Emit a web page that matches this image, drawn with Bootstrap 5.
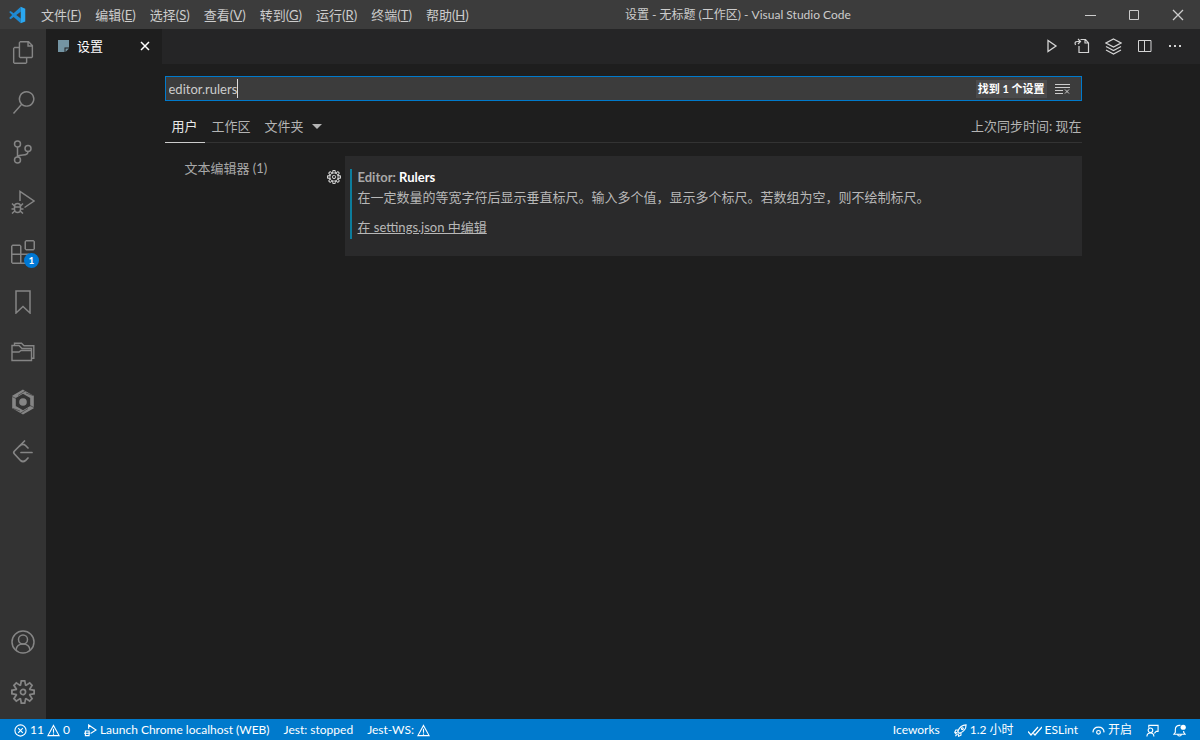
<!DOCTYPE html>
<html lang="zh-CN" data-bs-theme="dark">
<head>
<meta charset="utf-8">
<meta name="viewport" content="width=device-width, initial-scale=1">
<title>设置 - 无标题 (工作区) - Visual Studio Code</title>
<link href="https://cdn.jsdelivr.net/npm/bootstrap@5.3.0/dist/css/bootstrap.min.css" rel="stylesheet">
<style>
  body { font-family: Lato, "Noto Sans CJK SC", sans-serif; font-size: 13px; line-height: 16px; background: #1e1e1e; color: #ccc; }
  button, input { font: inherit; color: inherit; background: none; border: 0; padding: 0; }
  svg { display: block; flex: none; fill: none; stroke: currentColor; }
  svg .solid { fill: currentColor; stroke: none; }
  svg.flat { stroke: none; }
  a { color: inherit; }
  .title-bar { height: 29px; background: #3c3c3c; }
  .menu-list { gap: 8px; padding-left: 8px; }
  .menu-list button { padding: 0 7px; white-space: nowrap; }
  .menu-list u { text-underline-offset: 1px; }
  .window-title { font-size: 12px; }
  .window-btns { min-width: 200px; }
  .window-btns button { width: 44px; height: 29px; display: grid; place-items: center; }
  .activity-bar { width: 46px; background: #333; color: #858585; padding-bottom: 4px; }
  .activity-bar .group { display: flex; flex-direction: column; gap: 4px; }
  .activity-bar button { position: relative; width: 46px; height: 46px; display: grid; place-items: center; }
  .count { position: absolute; right: 7px; bottom: 7px; width: 15px; height: 15px; border-radius: 50%; background: #0078d4; color: #fff; font-size: 10px; line-height: 15px; font-weight: 700; }
  .tab-strip { height: 35px; background: #252526; }
  .file-tab { width: 116px; background: #1e1e1e; color: #fff; padding: 0 12px 1px 12px; }
  .editor-actions { gap: 15px; padding: 0 18px 1px 0; color: #d4d4d4; }
  .settings-page { max-width: 917px; padding-top: 12px; }
  .search-box { position: relative; height: 25px; background: #3c3c3c; border: 1px solid #007acc; padding: 0 11px 0 3px; }
  .search-box input { outline: 0; min-width: 0; }
  .caret { position: absolute; left: 71px; top: 2px; width: 1px; height: 19px; background: #ddd; }
  .found { background: #4a4a4b; color: #fff; font-size: 11px; padding: 1px 2px; font-weight: 700; }
  .scope-row { height: 33px; margin-top: 9px; border-bottom: 1px solid #333; color: #b4b4b4; }
  .scope-row button { padding: 0 7px; }
  .scope-row .active-scope { color: #e7e7e7; border-bottom: 1px solid #ccc; margin-bottom: -1px; }
  .result-row { padding-top: 13px; }
  .toc { width: 180px; padding: 4px 4px 0 20px; color: #a8a8a8; }
  .toc-gear { margin-top: 10px; color: #d0d0d0; }
  .setting-card { background: #2a2a2b; padding: 13px 5px 17px; }
  .setting-body { border-left: 2px solid #0c7d9d; padding: 0 0 4px 6px; color: #b8b8b8; }
  .setting-body h1 { font-size: 13px; line-height: 16px; font-weight: 700; margin: 0 0 4px; color: #a8a8a8; }
  .setting-body p { margin: 0 0 14px; }
  .status-bar { height: 21px; background: #007acc; color: #fff; padding: 1px 14px 0; font-size: 12px; }
  .status-group { display: flex; gap: 14px; }
  .status-bar button { display: flex; align-items: center; gap: 3px; white-space: nowrap; }
</style>
<script src="https://cdn.jsdelivr.net/npm/bootstrap@5.3.0/dist/js/bootstrap.bundle.min.js"></script>
</head>
<body class="vh-100 d-flex flex-column overflow-hidden">
<header class="title-bar d-flex align-items-center flex-shrink-0">
  <div class="menu-list d-flex align-items-center">
    <svg class="flat" width="18" height="18" viewBox="0 0 24 24"><path fill="#1f8ad2" d="M17 1 7.500 9.500 3.500 6.500 1.500 8 5.500 12l-4 4 2 1.500 4-3L17 23v-6.500L11 12l6-4.500z"/><path fill="#2aa7f0" d="M17 1 23 3.500v17L17 23z"/></svg>
    <nav class="d-flex" aria-label="菜单">
      <button>文件(<u>F</u>)</button><button>编辑(<u>E</u>)</button><button>选择(<u>S</u>)</button><button>查看(<u>V</u>)</button><button>转到(<u>G</u>)</button><button>运行(<u>R</u>)</button><button>终端(<u>T</u>)</button><button>帮助(<u>H</u>)</button>
    </nav>
  </div>
  <div class="window-title mx-auto">设置 - 无标题 (工作区) - Visual Studio Code</div>
  <div class="window-btns d-flex justify-content-end">
    <button aria-label="最小化"><svg width="12" height="12"><path d="M1 6.500h11"/></svg></button>
    <button aria-label="最大化"><svg width="12" height="12"><path d="M1.500 1.500h9v9h-9z"/></svg></button>
    <button aria-label="关闭"><svg width="12" height="12" stroke-width="1.300"><path d="m1 1 10 10M11 1 1 11"/></svg></button>
  </div>
</header>

<div class="d-flex flex-grow-1">
  <nav class="activity-bar d-flex flex-column justify-content-between flex-shrink-0" aria-label="活动栏">
    <div class="group">
      <button aria-label="资源管理器"><svg width="23" height="23" viewBox="0 0 24 24"><path class="solid" d="M17.500 0h-9L7 1.500V6H2.500L1 7.500v15.070L2.500 24h12.070L16 22.570V18h4.700l1.300-1.430V4.500L17.500 0zm0 2.120l2.380 2.380H17.500V2.120zm-3 20.380h-12v-15H7v9.070L8.500 18h6v4.500zm6-6h-12v-15H16V6h4.500v10.500z"/></svg></button>
      <button aria-label="搜索"><svg width="23" height="23" viewBox="0 0 24 24"><path class="solid" d="M15.250 0a8.250 8.250 0 0 0-6.180 13.720L1 22.880l1.120 1 8.050-9.120A8.251 8.251 0 1 0 15.250.01V0zm0 15a6.750 6.750 0 1 1 0-13.500 6.750 6.750 0 0 1 0 13.500z"/></svg></button>
      <button aria-label="源代码管理"><svg width="24" height="24" viewBox="0 0 24 24" stroke-width="1.500"><circle cx="6.500" cy="4" r="3"/><circle cx="6.500" cy="20" r="3"/><circle cx="17" cy="8.500" r="3"/><path d="M6.500 7v10M17 11.500c0 3-2 3.500-5 3.500-3 0-4.500.5-5.500 2"/></svg></button>
      <button aria-label="运行和调试"><svg width="24" height="24" viewBox="0 0 24 24" stroke-width="1.500"><path d="M9 11V1.500L23 11l-9.500 6.500"/><path d="M3.500 16.500a3 3 0 0 1 6 0v3a3 3 0 0 1-6 0zM3.500 17h6M3.500 16 1 13.500M9.500 16l2.500-2.500M3.500 19H.5M9.500 19h3M3.700 21 1 23.500M9.300 21l2.700 2.500"/></svg></button>
      <button aria-label="扩展"><svg width="24" height="24" viewBox="0 0 24 24"><path class="solid" d="M13.500 1.500L15 0h7.500L24 1.500V9l-1.500 1.500H15L13.500 9V1.500zm1.500 0V9h7.500V1.500H15zM0 15V6l1.500-1.500H9L10.500 6v7.500H18l1.500 1.500v7.500L18 24H1.500L0 22.500V15zm9-1.500V6H1.500v7.500H9zM9 15H1.500v7.500H9V15zm1.500 7.500H18V15h-7.500v7.500z"/></svg><span class="count">1</span></button>
      <button aria-label="书签"><svg width="24" height="24" viewBox="0 0 24 24" stroke-width="1.500"><path d="M5 1h14v22l-7-6.500L5 23z"/></svg></button>
      <button aria-label="项目管理器"><svg width="24" height="24" viewBox="0 0 24 24" stroke-width="1.400"><path d="M1 20.500v-15h7l3 3h9.500v12zM1 12h7l2-1.500h10.500M3.500 5.500V3.300h7l2.500 2.500h9.800v12.500h-2"/></svg></button>
      <button aria-label="Iceworks"><svg width="24" height="26" viewBox="0 0 24 26"><path d="M12 2.700 21 7.900v10.200l-9 5.200-9-5.200V7.900z" stroke-width="3.600"/><circle class="solid" cx="12" cy="13" r="3.800"/><path d="m15 1.500-8 5M1 7.500l5 2.500v6M2 19.500l7 2.500M9 24.500l8-5M23 18.500l-5-2.500v-6M22 6.500 15 4" stroke="#333" stroke-width=".6"/></svg></button>
      <button aria-label="LeetCode"><svg width="24" height="24" viewBox="0 0 24 24" stroke-width="1.700" stroke-linecap="round"><path d="m13.500 1-10 10q-1.500 1.500 0 3l6 6.500q2.500 2 5 0l2.500-2.500M8.500 6q3.500-3 6-.5l2.500 2.500M10 12.500h11"/></svg></button>
    </div>
    <div class="group">
      <button aria-label="帐户"><svg width="24" height="24" viewBox="0 0 24 24" stroke-width="1.500"><circle cx="12" cy="12" r="11"/><circle cx="12" cy="9.500" r="4.500"/><path d="M5 20c.5-4 3-6 7-6s6.500 2 7 6"/></svg></button>
      <button aria-label="管理"><svg width="24" height="24" viewBox="0 0 24 24"><path id="gear" class="solid" d="M19.850 8.750l4.150.83v4.840l-4.150.83 2.350 3.520-3.430 3.430-3.520-2.350-.83 4.150H9.580l-.83-4.150-3.520 2.350-3.430-3.430 2.350-3.520L0 14.420V9.580l4.150-.83L1.800 5.230 5.230 1.800l3.520 2.350L9.580 0h4.840l.83 4.150 3.520-2.350 3.430 3.430-2.350 3.520zm-1.570 5.070l4-.81v-2l-4-.81-.54-1.300 2.290-3.430-1.430-1.430-3.430 2.290-1.300-.54-.81-4h-2l-.81 4-1.300.54-3.430-2.290-1.430 1.430L6.380 8.900l-.54 1.300-4 .81v2l4 .81.54 1.300-2.290 3.430 1.430 1.430 3.430-2.290 1.300.54.81 4h2l.81-4 1.300-.54 3.430 2.290 1.430-1.430-2.290-3.430.54-1.300zm-8.186-4.672A3.430 3.430 0 0 1 12 8.570 3.440 3.440 0 0 1 15.430 12a3.430 3.430 0 1 1-5.336-2.852zm.956 4.274c.281.188.612.288.95.288A1.700 1.700 0 0 0 13.710 12a1.710 1.710 0 1 0-2.660 1.422z"/></svg></button>
    </div>
  </nav>

  <main class="flex-grow-1">
    <div class="tab-strip d-flex justify-content-between">
      <div class="file-tab d-flex align-items-center">
        <svg class="flat" width="11" height="12" viewBox="0 0 11 12"><path fill="#7494a3" d="M0 0h11v7.500H6.500V12H0z"/><path fill="#7494a3" d="M7.500 8.500H11L7.500 12z"/></svg>
        <span class="ms-2">设置</span>
        <button class="ms-auto" aria-label="关闭标签"><svg width="10" height="10" stroke-width="1.500"><path d="m1 1 8 8M9 1 1 9"/></svg></button>
      </div>
      <div class="editor-actions d-flex align-items-center">
        <button aria-label="运行"><svg width="16" height="16" stroke-width="1.300"><path d="M5 2.500v11L13 8z"/></svg></button>
        <button aria-label="打开设置文件"><svg width="16" height="16" stroke-width="1.200"><path d="M5 8v6.500h9.500V5l-3-3.500H6.500M11 1.500V5h3.500M1.500 7Q0 3.500 3.500 3.500H6M4 1l2.500 2.500L4 6"/></svg></button>
        <button aria-label="图层"><svg width="17" height="17" viewBox="0 0 17 17" stroke-width="1.200"><path d="m8.500 1 7.500 4-7.500 4L1 5zM1 8.500l7.500 4 7.500-4M1 12l7.500 4 7.500-4"/></svg></button>
        <button aria-label="拆分编辑器"><svg width="16" height="16"><path d="M1.500 2.500h12.500v11H1.500zM7.500 2.500v11"/></svg></button>
        <button aria-label="更多"><svg width="14" height="16"><path class="solid" d="M1 7h2v2H1zM6 7h2v2H6zM11 7h2v2h-2z"/></svg></button>
      </div>
    </div>

    <div class="settings-page mx-auto">
      <div class="search-box d-flex align-items-center">
        <input class="flex-grow-1" type="text" value="editor.rulers" aria-label="搜索设置">
        <span class="caret"></span>
        <span class="found">找到 1 个设置</span>
        <button class="ms-2" aria-label="清除搜索"><svg width="15" height="12"><path d="M0 1.500h15M0 4.500h15M0 7.500h8M0 10.500h8M10 6.500l4 4M14 6.500l-4 4"/></svg></button>
      </div>
      <div class="scope-row d-flex">
        <button class="active-scope">用户</button>
        <button>工作区</button>
        <button class="d-flex align-items-center gap-2">文件夹<svg width="10" height="6"><path class="solid" d="M0 1h10L5 6z"/></svg></button>
        <span class="ms-auto align-self-center">上次同步时间: 现在</span>
      </div>
      <div class="result-row d-flex">
        <div class="toc d-flex justify-content-between align-items-start flex-shrink-0">
          <span>文本编辑器 (1)</span>
          <button class="toc-gear" aria-label="更多操作"><svg width="14" height="14" viewBox="0 0 24 24"><use href="#gear"/><circle cx="12" cy="12" r="7" stroke-width="1.500"/></svg></button>
        </div>
        <section class="setting-card flex-grow-1">
          <div class="setting-body">
            <h1>Editor: <span class="text-white">Rulers</span></h1>
            <p>在一定数量的等宽字符后显示垂直标尺。输入多个值，显示多个标尺。若数组为空，则不绘制标尺。</p>
            <a href="#settings-json" class="d-inline-block">在 settings.json 中编辑</a>
          </div>
        </section>
      </div>
    </div>
  </main>
</div>

<footer class="status-bar d-flex justify-content-between flex-shrink-0">
  <div class="status-group">
    <button><svg width="13" height="13" viewBox="0 0 14 14" stroke-width="1.200"><circle cx="7" cy="7" r="6"/><path d="m4.500 4.500 5 5M9.500 4.500l-5 5"/></svg>11<svg width="13" height="13" viewBox="0 0 14 14" stroke-width="1.200"><path d="M7 1.500 13 12.500H1zM7 5v4.500M7 10.300v1.200"/></svg>0</button>
    <button><svg width="13" height="13" viewBox="0 0 14 14" stroke-width="1.200"><path d="M5 5V1l8 5.500L7.500 10M1.500 7.500h4v5h-4zM0 10h7"/></svg>Launch Chrome localhost (WEB)</button>
    <button>Jest: stopped</button>
    <button>Jest-WS: <svg width="13" height="13" viewBox="0 0 14 14" stroke-width="1.200"><path d="M7 1.500 13 12.500H1zM7 5v4.500M7 10.300v1.200"/></svg></button>
  </div>
  <div class="status-group">
    <button>Iceworks</button>
    <button><svg width="13" height="13" viewBox="0 0 14 14" stroke-width="1.200"><path d="M4 8C6 3 9 1 13 1c0 4-2 7-7 9zM4.500 6.500H2L.8 9l3 .5M7.500 9.500V12L5 13.200l-.7-3M1 11l1.500-1.500M1.500 13l2-2"/><circle cx="9" cy="5" r="1"/></svg>1.2 小时</button>
    <button><svg width="14" height="13" viewBox="0 0 14 13" stroke-width="1.200"><path d="m0 7.500 3 3.500 7-8M5.500 9.500 7 11l7-8"/></svg>ESLint</button>
    <button><svg width="13" height="13" viewBox="0 0 14 14" stroke-width="1.300"><path d="M1 9c.5-7.500 11.500-7.500 12 0"/><circle cx="7" cy="9" r="2"/></svg>开启</button>
    <button aria-label="反馈"><svg width="13" height="13" viewBox="0 0 14 14" stroke-width="1.200"><path d="M3 4V1.500h10V8h-2L9 10M1 13.500c0-5 7.500-5 7.500 0"/><circle cx="4.800" cy="6.800" r="2.500"/></svg></button>
    <button aria-label="通知"><svg width="13" height="13" viewBox="0 0 14 14" stroke-width="1.200"><path d="M8 1.500C4.500 1 2.500 3 2.500 6v3L1 11h12l-1.500-2V7.500M5 11c0 2.500 4 2.500 4 0"/><circle class="solid" cx="11" cy="3.500" r="2.800"/></svg></button>
  </div>
</footer>
</body>
</html>
